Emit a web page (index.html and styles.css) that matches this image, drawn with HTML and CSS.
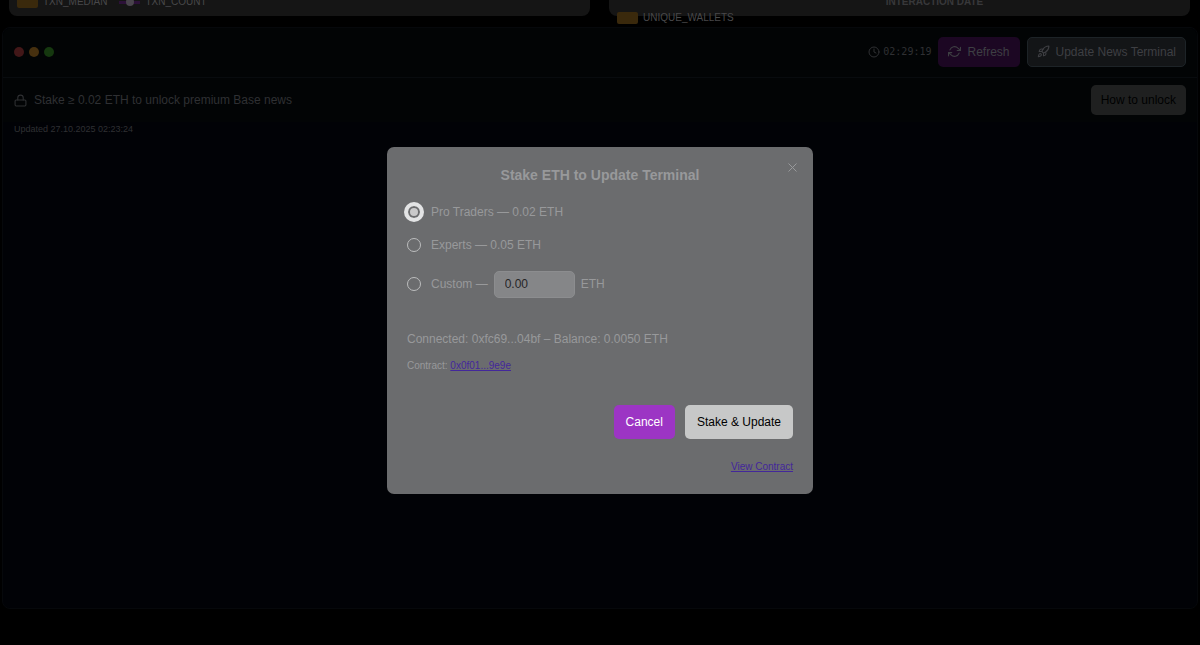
FILE: index.html
```html
<!DOCTYPE html>
<html lang="en">
<head>
    <meta charset="UTF-8">
    <meta name="viewport" content="width=device-width, initial-scale=1.0">
    <title>News Terminal</title>
    <link rel="stylesheet" href="styles.css">
</head>
<body>
    <section class="charts">
        <div class="chart-card">
            <ul class="legend">
                <li><span class="swatch"></span>TXN_MEDIAN</li>
                <li><span class="line-mark"></span>TXN_COUNT</li>
            </ul>
        </div>
        <div class="chart-card">
            <div class="axis-title">INTERACTION DATE</div>
            <ul class="legend">
                <li><span class="swatch"></span>UNIQUE_WALLETS</li>
            </ul>
        </div>
    </section>

    <main class="terminal">
        <header class="terminal-header">
            <div class="dots">
                <span class="dot red"></span>
                <span class="dot yellow"></span>
                <span class="dot green"></span>
            </div>
            <div class="actions">
                <div class="clock">
                    <svg width="12" height="12" viewBox="0 0 24 24" fill="none" stroke="currentColor" stroke-width="2" stroke-linecap="round" stroke-linejoin="round"><circle cx="12" cy="12" r="10"/><path d="M12 6v6l4 2"/></svg>
                    <time>02:29:19</time>
                </div>
                <button type="button" class="btn btn-refresh">
                    <svg width="13" height="13" viewBox="0 0 24 24" fill="none" stroke="currentColor" stroke-width="2" stroke-linecap="round" stroke-linejoin="round"><path d="M23 4v6h-6"/><path d="M1 20v-6h6"/><path d="M3.51 9a9 9 0 0 1 14.85-3.36L23 10M1 14l4.64 4.36A9 9 0 0 0 20.49 15"/></svg>
                    Refresh
                </button>
                <button type="button" class="btn btn-update">
                    <svg width="13" height="13" viewBox="0 0 24 24" fill="none" stroke="currentColor" stroke-width="2" stroke-linecap="round" stroke-linejoin="round"><path d="M4.5 16.5c-1.5 1.26-2 5-2 5s3.74-.5 5-2c.71-.84.7-2.13-.09-2.91a2.18 2.18 0 0 0-2.91-.09z"/><path d="m12 15-3-3a22 22 0 0 1 2-3.95A12.88 12.88 0 0 1 22 2c0 2.72-.78 7.5-6 11a22.35 22.35 0 0 1-4 2z"/><path d="M9 12H4s.55-3.03 2-4c1.62-1.08 5 0 5 0"/><path d="M12 15v5s3.03-.55 4-2c1.08-1.62 0-5 0-5"/></svg>
                    Update News Terminal
                </button>
            </div>
        </header>

        <div class="unlock-bar">
            <p class="unlock-text">
                <svg width="13" height="13" viewBox="0 0 24 24" fill="none" stroke="currentColor" stroke-width="2" stroke-linecap="round" stroke-linejoin="round"><rect x="2" y="11" width="20" height="11" rx="2"/><path d="M7 11V7a5 5 0 0 1 10 0v4"/></svg>
                Stake ≥ 0.02 ETH to unlock premium Base news
            </p>
            <button type="button" class="btn btn-unlock">How to unlock</button>
        </div>

        <p class="updated">Updated 27.10.2025 02:23:24</p>
    </main>

    <div class="overlay">
        <form class="modal" role="dialog" aria-labelledby="modal-title">
            <button type="button" class="close" aria-label="Close">
                <svg width="9" height="9" viewBox="0 0 9 9" fill="none" stroke="currentColor"><path d="M.5.5l8 8M8.5.5l-8 8"/></svg>
            </button>
            <h2 id="modal-title">Stake ETH to Update Terminal</h2>

            <div class="options">
                <div class="option">
                    <input type="radio" id="pro" name="tier" value="0.02" checked>
                    <label for="pro">Pro Traders — 0.02 ETH</label>
                </div>
                <div class="option">
                    <input type="radio" id="experts" name="tier" value="0.05">
                    <label for="experts">Experts — 0.05 ETH</label>
                </div>
                <div class="option">
                    <input type="radio" id="custom" name="tier" value="custom">
                    <label for="custom">Custom —</label>
                    <input type="text" class="amount" value="0.00" aria-label="Custom amount">
                    <span>ETH</span>
                </div>
            </div>

            <p class="connected">Connected: 0xfc69...04bf – Balance: 0.0050 ETH</p>
            <p class="contract">Contract: <a href="#">0x0f01...9e9e</a></p>

            <div class="modal-actions">
                <button type="button" class="btn-cancel">Cancel</button>
                <button type="submit" class="btn-stake">Stake &amp; Update</button>
            </div>
            <p class="view"><a href="#">View Contract</a></p>
        </form>
    </div>
</body>
</html>
```
FILE: styles.css
```css
* {
    box-sizing: border-box;
}
body {
    margin: 0;
    background-color: #000;
    color: #2f3033;
    font-family: "Liberation Sans", Arial, sans-serif;
    font-size: 12px;
    overflow: hidden;
}
p, h2, ul {
    margin: 0;
    padding: 0;
}
button, input {
    font-family: inherit;
    font-size: 12px;
}
svg {
    flex: none;
}

/* charts, mostly scrolled out of view */
.charts {
    display: grid;
    grid-template-columns: 1fr 1fr;
    gap: 19px;
    padding: 0 10px 0 9px;
    margin-top: -24px;
}
.chart-card {
    height: 40px;
    padding: 18px 8px 0;
    border-radius: 8px;
    background-color: #151515;
}
.legend {
    display: flex;
    gap: 12px;
    list-style: none;
    font-size: 10px;
    line-height: 16px;
    color: #48484a;
}
.legend li {
    display: flex;
    align-items: center;
    gap: 5px;
}
.swatch {
    width: 21px;
    height: 12px;
    border-radius: 2px;
    background-color: #3a290c;
}
.line-mark {
    display: flex;
    align-items: center;
    justify-content: center;
    width: 21px;
    height: 3px;
    background-color: #2c1138;
}
.line-mark::after {
    content: "";
    width: 8px;
    height: 8px;
    border-radius: 50%;
    background-color: #49444c;
}
.axis-title {
    padding-left: 70px;
    font-size: 10px;
    font-weight: bold;
    line-height: 16px;
    text-align: center;
    color: #38383a;
}

/* terminal */
.terminal {
    min-height: 582px;
    margin: 11px 2px 0;
    border: 1px solid #06080b;
    border-radius: 8px;
    background-color: #010206;
}
.terminal-header {
    display: flex;
    align-items: center;
    justify-content: space-between;
    height: 50px;
    padding: 0 11px 2px;
    border-bottom: 1px solid #080b0e;
    background-color: #020405;
    border-radius: 8px 8px 0 0;
}
.dots {
    display: flex;
    gap: 5px;
}
.dot {
    width: 10px;
    height: 10px;
    border-radius: 50%;
}
.red {
    background-color: #421718;
}
.yellow {
    background-color: #46300f;
}
.green {
    background-color: #15380f;
}
.actions {
    display: flex;
    align-items: center;
    gap: 7px;
}
.clock {
    display: flex;
    align-items: center;
    gap: 3px;
    font-family: "DejaVu Sans Mono", monospace;
    font-size: 10px;
}
.btn {
    display: flex;
    align-items: center;
    gap: 6px;
    height: 30px;
    padding: 0 9px;
    border: 1px solid transparent;
    border-radius: 5px;
    color: #3e3f43;
    cursor: pointer;
}
.btn-refresh {
    background-color: #1c0723;
}
.btn-update {
    border-color: #1d2327;
    background-color: #131517;
}
.btn-unlock {
    background-color: #1f2020;
    color: #000;
}
.unlock-bar {
    display: flex;
    align-items: center;
    justify-content: space-between;
    height: 44px;
    padding: 0 11px;
    background-color: #020405;
}
.unlock-text {
    display: flex;
    align-items: center;
    gap: 7px;
}
.updated {
    padding: 0 11px;
    font-size: 9px;
    line-height: 14px;
}

/* stake modal */
.overlay {
    position: fixed;
    inset: 0;
    display: flex;
    align-items: center;
    justify-content: center;
    padding-bottom: 4px;
}
.modal {
    position: relative;
    width: 426px;
    padding: 18px 20px 20px;
    border-radius: 7px;
    background-color: #6b6c6e;
    color: #98999b;
}
.close {
    position: absolute;
    top: 16px;
    right: 16px;
    display: flex;
    padding: 0;
    border: 0;
    background: none;
    color: #98999b;
    cursor: pointer;
}
.modal h2 {
    font-size: 14px;
    line-height: 20px;
    text-align: center;
}
.options {
    padding-top: 16px;
}
.option {
    display: flex;
    align-items: center;
    gap: 6px;
    height: 22px;
    margin-bottom: 11px;
}
.option:last-child {
    height: 34px;
}
.option input[type="radio"] {
    appearance: none;
    width: 14px;
    height: 14px;
    margin: 0 4px 0 0;
    border: 1px solid #bcbdbe;
    border-radius: 50%;
}
.option input[type="radio"]:checked {
    border-color: #e3e4e5;
    background-color: #c9c9ca;
    box-shadow: 0 0 0 3px #e3e4e5, inset 0 0 0 2px #6b6c6e;
}
.option .amount {
    width: 81px;
    height: 27px;
    padding: 0 10px;
    border: 1px solid #8c8d8f;
    border-radius: 5px;
    background-color: #858688;
    color: #252527;
}
.connected {
    padding-top: 19px;
    line-height: 16px;
}
.contract {
    padding-top: 12px;
    font-size: 10px;
    line-height: 14px;
}
.modal a {
    color: #43279b;
}
.modal-actions {
    display: flex;
    justify-content: flex-end;
    gap: 10px;
    padding-top: 32px;
}
.modal-actions button {
    height: 34px;
    padding: 0 12px;
    border: 0;
    border-radius: 5px;
    cursor: pointer;
}
.modal-actions .btn-cancel {
    background-color: #9c35c4;
    color: #fff;
}
.modal-actions .btn-stake {
    background-color: #c7c8c8;
    color: #000;
}
.view {
    padding-top: 21px;
    font-size: 10px;
    line-height: 14px;
    text-align: right;
}
```
